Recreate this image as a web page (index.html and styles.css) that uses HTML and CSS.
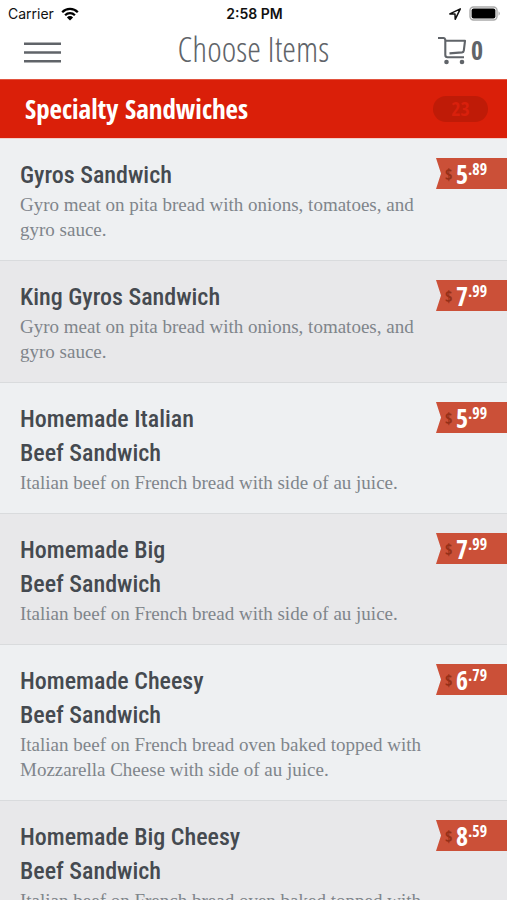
FILE: index.html
```html
<!DOCTYPE html>
<html lang="en">
<head>
    <meta charset="UTF-8">
    <meta name="viewport" content="width=device-width, initial-scale=1.0">
    <title>Choose Items</title>
    <link rel="stylesheet" href="styles.css">
</head>
<body>
    <div class="status-bar">
        <div class="status-left">
            <span>Carrier</span>
            <svg width="18" height="14" viewBox="0 0 18 14" fill="none" stroke="#000" stroke-width="2.3">
                <path d="M1.2 5.2a11 11 0 0 1 15.6 0M4.1 8.2a7 7 0 0 1 9.8 0"/>
                <path d="M9 13.5L5.9 10.4a4.4 4.4 0 0 1 6.2 0z" fill="#000" stroke="none"/>
            </svg>
        </div>
        <div class="status-time">2:58 PM</div>
        <div class="status-right">
            <svg width="14" height="14" viewBox="0 0 14 14" fill="none" stroke="#111" stroke-width="1.5" stroke-linejoin="round">
                <path d="M12.3 1.8L1.8 6.9l5.2.2.2 5.2z"/>
            </svg>
            <svg width="32" height="15" viewBox="0 0 32 15">
                <rect x="1" y="1" width="27" height="13" rx="3.5" fill="#fff" stroke="#aaa" stroke-width="1.4"/>
                <rect x="2.6" y="2.6" width="23.8" height="9.8" rx="2" fill="#000"/>
                <path d="M29.6 5.2a3 3 0 0 1 0 4.6z" fill="#999"/>
            </svg>
        </div>
    </div>

    <header class="nav-bar">
        <button class="menu-btn" aria-label="Menu">
            <svg width="37" height="21" viewBox="0 0 37 21" stroke="#606469" stroke-width="2.4">
                <path d="M0 1.7h37M0 10.5h37M0 19.2h37"/>
            </svg>
        </button>
        <h1>Choose Items</h1>
        <button class="cart-btn" aria-label="Cart">
            <svg width="30" height="29" viewBox="0 0 30 29" fill="none" stroke="#606469" stroke-width="2.1" stroke-linejoin="round">
                <path d="M1 2h5.5q1.5 0 1.8 2v15q0 2.2 2.2 2.2H27"/>
                <path d="M8.3 4.8H28l-1.2 9.8q-.2 1.6-1.8 1.8l-12.5 1"/>
                <circle cx="9.5" cy="26" r="2.3" fill="#606469" stroke="none"/>
                <circle cx="25" cy="26" r="2.3" fill="#606469" stroke="none"/>
            </svg>
            <span>0</span>
        </button>
    </header>

    <div class="category">
        <h2>Specialty Sandwiches</h2>
        <span class="count">23</span>
    </div>

    <ul class="items">
        <li class="item">
            <div class="info">
                <h3>Gyros Sandwich</h3>
                <p>Gyro meat on pita bread with onions, tomatoes, and gyro sauce.</p>
            </div>
            <div class="price"><small>$</small><b>5</b><sup>.89</sup></div>
        </li>
        <li class="item">
            <div class="info">
                <h3>King Gyros Sandwich</h3>
                <p>Gyro meat on pita bread with onions, tomatoes, and gyro sauce.</p>
            </div>
            <div class="price"><small>$</small><b>7</b><sup>.99</sup></div>
        </li>
        <li class="item">
            <div class="info">
                <h3>Homemade Italian<br>Beef Sandwich</h3>
                <p>Italian beef on French bread with side of au juice.</p>
            </div>
            <div class="price"><small>$</small><b>5</b><sup>.99</sup></div>
        </li>
        <li class="item">
            <div class="info">
                <h3>Homemade Big<br>Beef Sandwich</h3>
                <p>Italian beef on French bread with side of au juice.</p>
            </div>
            <div class="price"><small>$</small><b>7</b><sup>.99</sup></div>
        </li>
        <li class="item">
            <div class="info">
                <h3>Homemade Cheesy<br>Beef Sandwich</h3>
                <p>Italian beef on French bread oven baked topped with Mozzarella Cheese with side of au juice.</p>
            </div>
            <div class="price"><small>$</small><b>6</b><sup>.79</sup></div>
        </li>
        <li class="item">
            <div class="info">
                <h3>Homemade Big Cheesy<br>Beef Sandwich</h3>
                <p>Italian beef on French bread oven baked topped with Mozzarella Cheese with side of au juice.</p>
            </div>
            <div class="price"><small>$</small><b>8</b><sup>.59</sup></div>
        </li>
    </ul>
</body>
</html>
```
FILE: styles.css
```css
* {
    margin: 0;
    padding: 0;
    box-sizing: border-box;
}

html {
    scrollbar-width: none;
}

body {
    background: #fff;
    color: #454a50;
    font-family: "Open Sans Condensed", sans-serif;
}

button {
    background: none;
    border: none;
    color: inherit;
    font-family: inherit;
    cursor: pointer;
}

/* phone status bar */
.status-bar {
    display: grid;
    grid-template-columns: 1fr auto 1fr;
    align-items: center;
    height: 27px;
    padding: 0 6px 0 8px;
    font-family: Inter, sans-serif;
    font-size: 14px;
    color: #111;
}

.status-left,
.status-right {
    display: flex;
    align-items: center;
    gap: 7px;
}

.status-right {
    justify-content: flex-end;
}

.status-time {
    font-weight: 600;
}

/* title bar */
.nav-bar {
    display: grid;
    grid-template-columns: 1fr auto 1fr;
    align-items: center;
    height: 52px;
    padding: 0 24px 8px;
    color: #606469;
}

.nav-bar svg {
    display: block;
}

.menu-btn {
    justify-self: start;
    padding-top: 6px;
}

.nav-bar h1 {
    font-family: "Open Sans Condensed Light", "Open Sans Condensed", sans-serif;
    font-size: 35px;
    font-weight: 300;
    line-height: 42px;
}

.cart-btn {
    justify-self: end;
    display: flex;
    align-items: center;
    gap: 4px;
    padding-top: 2px;
    font-size: 26px;
    font-weight: bold;
    line-height: 24px;
}

.category {
    display: flex;
    justify-content: space-between;
    align-items: center;
    height: 60px;
    padding: 0 19px 0 25px;
    background: #da1f09;
    border-top: 1px solid #e2543f;
    border-bottom: 1px solid #f2cfc9;
    color: #fff;
}

.category h2 {
    font-size: 27px;
    line-height: 34px;
}

.count {
    width: 55px;
    border-radius: 13px;
    background: #bf1b07;
    color: #d9200c;
    font-size: 20px;
    font-weight: bold;
    line-height: 26px;
    text-align: center;
}

.items {
    list-style: none;
}

.item {
    display: flex;
    justify-content: space-between;
    align-items: flex-start;
    padding: 19px 0 18px 20px;
    background: #eef0f2;
    border-bottom: 1px solid #d9dbdd;
}

.item:nth-child(even) {
    background: #e8e8ea;
}

.info {
    flex: 1;
    padding-right: 8px;
}

.info h3 {
    font-family: "Roboto Condensed", "Open Sans Condensed", sans-serif;
    font-size: 24px;
    font-weight: 500;
    line-height: 34px;
}

.info p {
    font-family: "Liberation Serif", serif;
    font-size: 19px;
    line-height: 25px;
    color: #7f858b;
}

/* ribbon with a notch on the left edge */
.price {
    display: flex;
    align-items: center;
    width: 71px;
    height: 31px;
    padding-left: 9px;
    background: #cb5038;
    clip-path: polygon(0 0, 100% 0, 100% 100%, 0 100%, 5px 50%);
    color: #fff;
    font-weight: bold;
}

.price small {
    width: 11px;
    font-size: 16px;
    color: #963018;
}

.price b {
    font-size: 26px;
}

.price sup {
    align-self: flex-start;
    font-size: 16px;
    line-height: 22px;
}
```
